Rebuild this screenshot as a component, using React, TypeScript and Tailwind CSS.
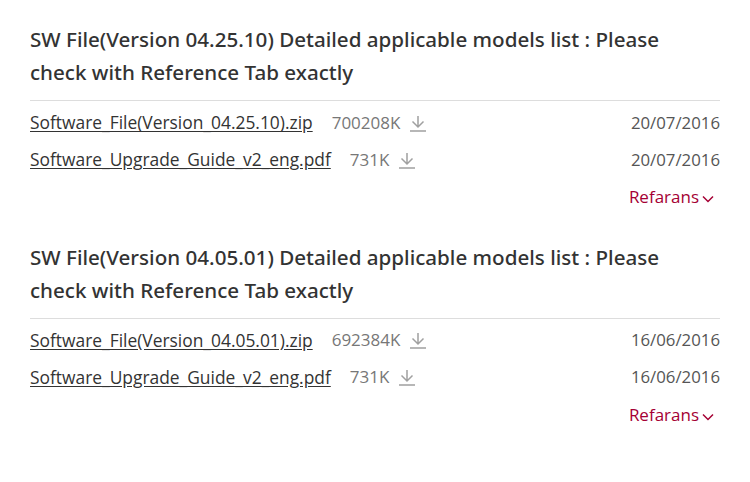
const SECTIONS = [
  {
    title: 'SW File(Version 04.25.10) Detailed applicable models list : Please check with Reference Tab exactly',
    files: [
      { name: 'Software_File(Version_04.25.10).zip', size: '700208K', date: '20/07/2016' },
      { name: 'Software_Upgrade_Guide_v2_eng.pdf', size: '731K', date: '20/07/2016' },
    ],
  },
  {
    title: 'SW File(Version 04.05.01) Detailed applicable models list : Please check with Reference Tab exactly',
    files: [
      { name: 'Software_File(Version_04.05.01).zip', size: '692384K', date: '16/06/2016' },
      { name: 'Software_Upgrade_Guide_v2_eng.pdf', size: '731K', date: '16/06/2016' },
    ],
  },
];

function DownloadIcon() {
  return (
    <svg width="20" height="20" viewBox="0 0 20 20" fill="none" stroke="#a0a0a0" strokeWidth="1.5">
      <path d="M10 3v11M4.5 8.5L10 14l5.5-5.5M2 18h16" />
    </svg>
  );
}

export default function App() {
  return (
    <div className="w-[750px] h-[482px] bg-white px-[30px] pt-[23px] text-[#333]" style={{ fontFamily: '"Open Sans", sans-serif' }}>
      {SECTIONS.map((s) => (
        <div key={s.title} className="mb-[31px]">
          <h2 className="text-[20.6px] leading-[33px] font-medium text-[#333] pr-[40px] font-['Noto_Sans',sans-serif]">{s.title}</h2>
          <div className="mt-[11px] border-t border-[#ddd] pt-[3px]">
            {s.files.map((f) => (
              <div key={f.name} className="flex items-center h-[37px]">
                <a className="underline text-[17.4px] text-[#333] underline-offset-2">{f.name}</a>
                <span className="ml-[19px] text-[17px] text-[#777]">{f.size}</span>
                <span className="ml-[8px]"><DownloadIcon /></span>
                <span className="ml-auto text-[16.8px] text-[#555]">{f.date}</span>
              </div>
            ))}
            <div className="flex justify-end items-center pr-[6px] mt-[6px]">
              <span className="text-[17px] text-[#a50034]">Refarans</span>
              <svg width="12" height="8" viewBox="0 0 12 8" className="ml-[3px] mt-[5px]" fill="none" stroke="#a50034" strokeWidth="1.5">
                <path d="M1 1.5l5 5 5-5" />
              </svg>
            </div>
          </div>
        </div>
      ))}
    </div>
  );
}
